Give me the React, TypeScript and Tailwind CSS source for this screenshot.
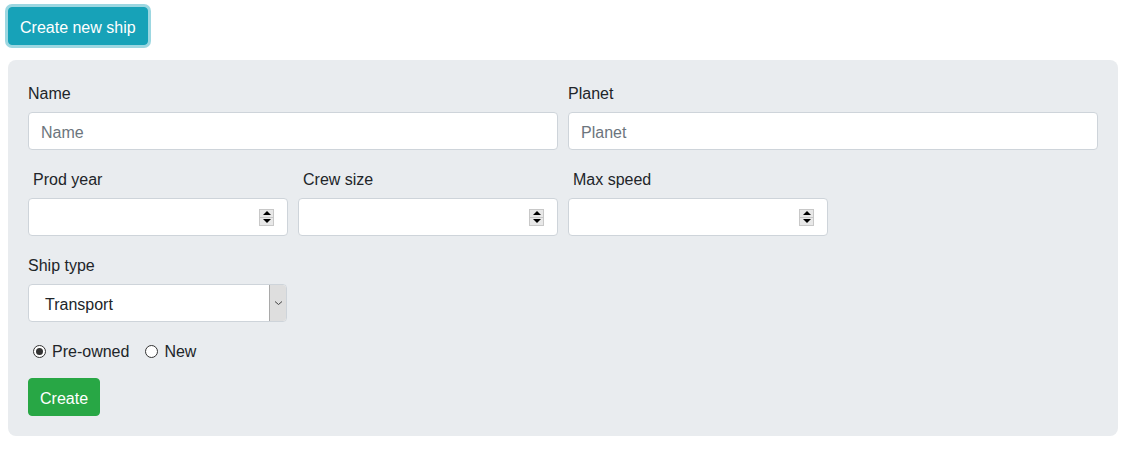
import { useState } from 'react';

function Spinner() {
  return (
    <div className="flex h-[17px] w-[15px] shrink-0 flex-col border border-[#c8c8c8] bg-[#e8e8e8]">
      <div className="flex flex-1 items-center justify-center border-b border-[#c8c8c8]">
        <div className="h-0 w-0 border-x-[4px] border-b-[4px] border-x-transparent border-b-black" />
      </div>
      <div className="flex flex-1 items-center justify-center">
        <div className="h-0 w-0 border-x-[4px] border-t-[4px] border-x-transparent border-t-black" />
      </div>
    </div>
  );
}

function NumberField({ label }: { label: string }) {
  return (
    <div className="flex w-[260px] flex-col">
      <label className="mb-2 h-6 pt-[3px] pl-[5px] leading-[21px]">{label}</label>
      <div className="flex h-[38px] items-center rounded border border-[#ced4da] bg-white pr-[13px]">
        <input className="min-w-0 flex-1 bg-transparent px-3 outline-none" />
        <Spinner />
      </div>
    </div>
  );
}

function TextField({ label }: { label: string }) {
  return (
    <div className="flex flex-1 flex-col">
      <label className="mb-2 h-6 pt-[3px] leading-[21px]">{label}</label>
      <input
        placeholder={label}
        className="h-[38px] rounded border border-[#ced4da] bg-white px-3 pt-[3px] text-[#495057] outline-none placeholder:text-[#6c757d]"
      />
    </div>
  );
}

function Radio({ checked, label, onClick }: { checked: boolean; label: string; onClick: () => void }) {
  return (
    <label className="flex cursor-pointer items-center gap-[6px]" onClick={onClick}>
      <span className="flex h-[13px] w-[13px] items-center justify-center rounded-full border border-[#333] bg-white">
        {checked && <span className="h-[7px] w-[7px] rounded-full bg-[#333]" />}
      </span>
      <span>{label}</span>
    </label>
  );
}

export default function App() {
  const [used, setUsed] = useState(true);

  return (
    <div
      className="min-h-screen bg-white text-[16px] text-[#212529]"
      style={{ fontFamily: '"Segoe UI", "Liberation Sans", Arial, sans-serif' }}
    >
      <div className="px-2 pt-[7px]">
        <button className="h-[38px] rounded border border-[#17a2b8] bg-[#17a2b8] px-[11px] pt-[3px] text-white shadow-[0_0_0_3px_rgba(58,176,195,0.5)]">
          Create new ship
        </button>
      </div>

      <div className="mx-2 mt-[15px] flex w-[1110px] flex-col rounded-lg bg-[#e9ecef] p-5">
        {/* name / planet */}
        <div className="mb-4 flex gap-[10px]">
          <TextField label="Name" />
          <TextField label="Planet" />
        </div>

        {/* numbers */}
        <div className="mb-4 flex gap-[10px]">
          <NumberField label="Prod year" />
          <NumberField label="Crew size" />
          <NumberField label="Max speed" />
        </div>

        {/* ship type */}
        <div className="mb-4 flex flex-col">
          <label className="mb-2 h-6 pt-[3px] leading-[21px]">Ship type</label>
          <div className="flex h-[38px] w-[259px] items-stretch overflow-hidden rounded border border-[#ced4da] bg-white">
            <div className="flex flex-1 items-center pt-[3px] pl-4 text-[#212529]">Transport</div>
            <div className="flex w-[17px] items-center justify-center border-l border-[#a9a9a9] bg-[#dedede]">
              <svg width="9" height="6" viewBox="0 0 9 6">
                <path d="M1 1.5 L4.5 4.5 L8 1.5" fill="none" stroke="#444" strokeWidth="1" />
              </svg>
            </div>
          </div>
        </div>

        {/* condition */}
        <div className="mb-4 flex h-6 items-center gap-[16px] pt-[3px] pl-[5px]">
          <Radio checked={used} label="Pre-owned" onClick={() => setUsed(true)} />
          <Radio checked={!used} label="New" onClick={() => setUsed(false)} />
        </div>

        <div>
          <button className="h-[38px] rounded border border-[#28a745] bg-[#28a745] px-[11px] pt-[3px] text-white">
            Create
          </button>
        </div>
      </div>
    </div>
  );
}
